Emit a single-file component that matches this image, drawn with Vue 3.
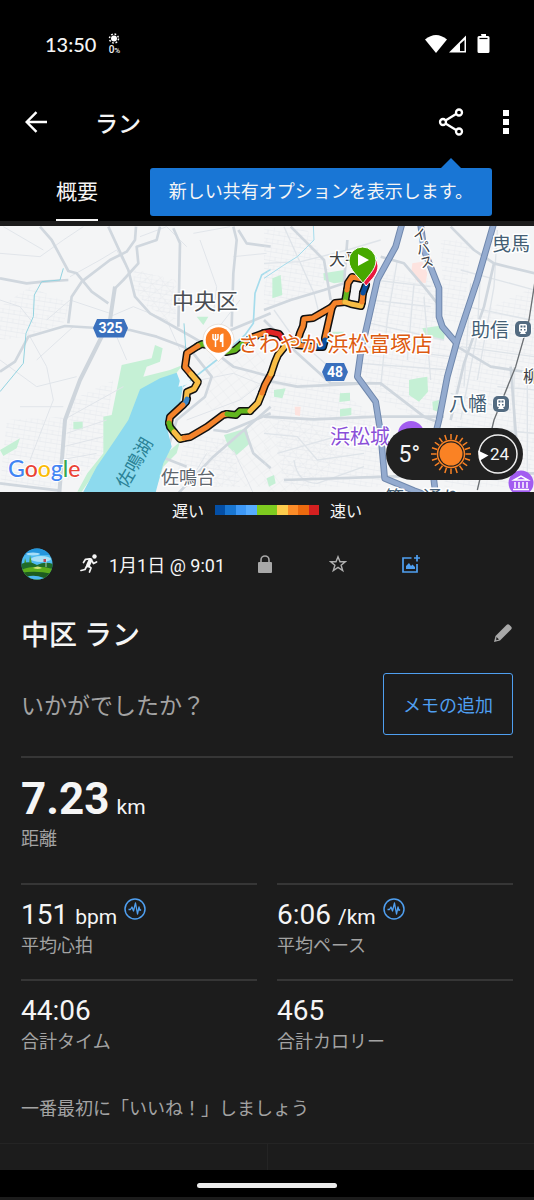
<template>
  <div class="page">
    <header class="top">
      <div class="status-bar">
        <span class="clock">13:50</span>
        <span class="rain">
          <svg width="12" height="11" viewBox="0 0 24 22">
            <circle cx="12" cy="11" r="6" fill="#fff" />
            <circle cx="12" cy="11" r="9" fill="none" stroke="#fff" stroke-width="3" stroke-dasharray="3.5 3.57" />
          </svg>
          <span>0<small>%</small></span>
        </span>
        <span class="status-icons">
          <svg width="66" height="22" viewBox="0 0 66 22" fill="#fff">
            <path d="M1 6.500Q12 -2.500 23 6.500L12 20Z" />
            <path d="M42 2.500V19.500H25Z" />
            <path d="M36 11V18H40.500V7Z" fill="#000" />
            <path d="M57 1h5v2h2q1.500 0 1.500 1.500v14q0 1.500-1.500 1.500h-9q-1.500 0-1.500-1.500v-14q0-1.500 1.500-1.500h2.500z" />
            <path d="M55.500 5.500h8" stroke="#000" stroke-width="1.200" />
          </svg>
        </span>
      </div>

      <div class="app-bar">
        <button class="icon-btn" aria-label="戻る">
          <svg width="24" height="24" viewBox="0 0 24 24" fill="none" stroke="#fff" stroke-width="2.400">
            <path d="M23 12H3M12.500 2.200L2.700 12l9.800 9.800" />
          </svg>
        </button>
        <h1>ラン</h1>
        <button class="icon-btn share" aria-label="共有">
          <svg width="28" height="28" viewBox="0 0 28 28" fill="none" stroke="#fff" stroke-width="2.300">
            <path d="M7.500 12.500L18.500 5.800M7.500 15.500L18.500 22.200" />
            <circle cx="5" cy="14" r="3" />
            <circle cx="21" cy="4.500" r="3" />
            <circle cx="21" cy="23.500" r="3" />
          </svg>
        </button>
        <button class="icon-btn" aria-label="メニュー">
          <svg width="24" height="26" viewBox="0 0 24 26" fill="#fff">
            <path d="M9 1h6v6H9zM9 10h6v6H9zM9 19h6v6H9z" />
          </svg>
        </button>
        <div class="tooltip" role="tooltip">新しい共有オプションを表示します。</div>
      </div>

      <nav class="tabs">
        <button class="tab">概要</button>
      </nav>
    </header>

    <section class="map">
      <svg class="map-canvas" viewBox="0 226 534 266">
        <defs>
          <pattern id="blocks" width="34" height="26" patternUnits="userSpaceOnUse" patternTransform="rotate(9)">
            <path d="M0 0H34M0 0V26M17 0V13M0 13H34" fill="none" stroke="#e6eaee" stroke-width="2" />
          </pattern>
          <pattern id="blocks-tilt" width="30" height="24" patternUnits="userSpaceOnUse" patternTransform="rotate(-38)">
            <path d="M0 0H30M0 0V24" fill="none" stroke="#e4e8ec" stroke-width="2" />
          </pattern>
        </defs>
        <rect y="226" width="534" height="266" fill="#f4f5f6" />

        <g transform="translate(0 220) scale(0.33333)" fill="none" stroke-linejoin="round">
          <path v-for="d in westBlocks" :key="d" :d="d" fill="url(#blocks)" />
          <path v-for="d in westTilted" :key="d" :d="d" fill="url(#blocks-tilt)" />
          <path v-for="d in westParks" :key="d" :d="d" fill="#c5f0d5" />
          <path v-for="d in westStreets" :key="d" :d="d" stroke="#e1e5ea" stroke-width="3" />
          <path v-for="d in westRoads" :key="d" :d="d" stroke="#d0d7de" stroke-width="8" />
          <path d="M345 200L330 300L240 480L195 600L178 820" stroke="#ced5dc" stroke-width="12" />
          <path d="M245 825L290 740L345 660L385 600L420 508L480 475L530 458L548 505L538 560L500 620L515 680L490 730L465 825Z" fill="#8ddaee" />
          <path d="M548 500L650 420L735 345L760 310L765 220L785 165L812 148" stroke="#a5dcec" stroke-width="5" />
          <path d="M0 515L70 430L78 340L100 290L103 225L125 185L180 180L190 145M552 310L558 400" stroke="#93d3e0" stroke-width="3" />
          <path d="M535 500L548 448L560 470L575 490Z" fill="#eef7fa" />
        </g>

        <g transform="translate(264 220) scale(0.33333)" fill="none" stroke-linejoin="round">
          <path v-for="d in eastBlocks" :key="d" :d="d" fill="url(#blocks)" />
          <path d="M0 600L140 600L240 700L120 825H0Z" fill="url(#blocks-tilt)" />
          <path v-for="d in eastParks" :key="d" :d="d" fill="#c5f0d5" />
          <path d="M445 130l30-5 15 35-5 30-25-5-18-30zM92 560l18 0-2 28-15-3z" fill="#fde3df" />
          <path v-for="d in eastStreets" :key="d" :d="d" stroke="#dfe4e9" stroke-width="4" />
          <path v-for="d in eastRoads" :key="d" :d="d" stroke="#d0d7de" stroke-width="8" />
          <path d="M812 190L795 300L755 440L690 600L640 810" stroke="#6c7074" stroke-width="4" />
          <path d="M0 175L60 135L100 110L150 60L148 15" stroke="#a5dcec" stroke-width="3" />
          <path v-for="d in highways" :key="d" :d="d" stroke="#7088ad" stroke-width="20" />
          <path v-for="d in highways" :key="d + 'in'" :d="d" stroke="#94abcf" stroke-width="14" />
        </g>

        <g fill="none" stroke-linejoin="round" stroke-linecap="round">
          <path v-for="seg in route" :key="seg.d" :d="seg.d" stroke="#111" stroke-width="8" />
          <path v-for="seg in route" :key="seg.d + 'c'" :d="seg.d" :stroke="seg.color" stroke-width="5" />
        </g>

        <g fill="#3a70bd">
          <path d="M97 319h27l4 9-4 9.500H97l-4-9.500zM326 363h18l4 9-4 9H326l-4-9z" />
        </g>
        <g class="shield">
          <text x="110.500" y="333">325</text>
          <text x="335" y="377">48</text>
        </g>

        <g class="label">
          <text class="area" x="205" y="309">中央区</text>
          <text class="place" x="188" y="484">佐鳴台</text>
          <text class="lake" transform="translate(140 466) rotate(-60)">佐鳴湖</text>
          <text class="small" x="329" y="265">大平台</text>
          <text class="small vertical" transform="translate(417 228) rotate(-14)">イパス</text>
          <text class="station" x="492" y="251">曳馬</text>
          <text class="station" x="471" y="337">助信</text>
          <text class="station" x="449" y="411">八幡</text>
          <text class="small" x="523" y="382">柳</text>
          <text class="castle" x="330" y="444">浜松城</text>
          <text class="station" x="385" y="505">第一通り</text>
          <text class="shop" x="238" y="351">さわやか 浜松富塚店</text>
        </g>

        <g v-for="s in stations" :key="s.y" :transform="`translate(${s.x} ${s.y})`">
          <circle r="9" fill="#fff" />
          <rect x="-8" y="-8" width="16" height="16" rx="5" fill="#536b81" />
          <path d="M-4 -3.500q0-1.500 1.500-1.500h5q1.500 0 1.500 1.500v5q0 1.500-1.500 1.500h-5Q-4 3-4 1.500zM-3 5l1-2h4l1 2z" fill="#fff" />
          <path d="M-2.500 -3.500h2v2h-2zM.5 -3.500h2v2h-2zM-2.500 0h1.500v1.500h-1.500zM1 0h1.500v1.500H1z" fill="#536b81" />
        </g>

        <circle cx="411" cy="434" r="13" fill="#a25cf0" />
        <g transform="translate(521 483)">
          <circle r="12.500" fill="#a25cf0" />
          <path d="M-7 -3L0 -7L7 -3ZM-6 -1V5M-2 -1V5M2 -1V5M6 -1V5M-8 6.500H8" fill="none" stroke="#fff" stroke-width="1.500" />
        </g>

        <path d="M218.500 361.500l-8-8.500a15.500 15.500 0 1 1 16 0z" fill="#fff" stroke="#d8d0c8" stroke-width=".6" />
        <circle cx="218.500" cy="340" r="12.800" fill="#fb7d22" />
        <path d="M213 334v4q0 2 2.500 2t2.500-2v-4M215.500 334v13" fill="none" stroke="#fff" stroke-width="1.500" />
        <path d="M223.500 333.500v13.500h-1.700v-5h-2v-5q0-3.500 3.700-3.500z" fill="#fff" />

        <path d="M366 286c-4-7-11-12-11-20a11.500 11.500 0 0 1 23 0c0 8-6 13-12 20z" fill="#e8173e" stroke="#fff" />
        <path d="M363 283.500c-3-6-14-13-14-23a13.500 13.500 0 0 1 27 0c0 10-10 17-13 23z" fill="#46a800" stroke="#fff" />
        <path d="M358 254v12l11-6z" fill="#fff" />

        <text class="google" x="8" y="477"><tspan fill="#4285f4">G</tspan><tspan fill="#ea4335">o</tspan><tspan fill="#fbbc05">o</tspan><tspan fill="#4285f4">g</tspan><tspan fill="#34a853">l</tspan><tspan fill="#ea4335">e</tspan></text>
      </svg>

      <div class="weather">
        <span>5°</span>
        <svg width="40" height="40" viewBox="-20 -20 40 40">
          <path v-for="a in 20" :key="a" d="M0 -14.500V-20" :transform="`rotate(${a * 18})`" stroke="#fa8224" stroke-width="1.500" />
          <circle r="13.500" fill="none" stroke="#fa8224" stroke-width="1.500" />
          <circle r="11.500" fill="#fa8224" />
        </svg>
        <span class="wind">
          <svg width="40" height="40" viewBox="0 0 40 40">
            <circle cx="20" cy="20" r="19" fill="none" stroke="#eee" stroke-width="1.500" />
            <path d="M0 16.500L10.500 21.500L2 26.500Z" fill="#fff" />
          </svg>
          <span>24</span>
        </span>
      </div>
    </section>

    <div class="legend">
      <span>遅い</span>
      <span class="scale">
        <i v-for="(c, i) in paceColors" :key="i" :style="{ background: c }"></i>
      </span>
      <span>速い</span>
    </div>

    <main class="content">
      <div class="meta">
        <svg class="avatar" width="32" height="32" viewBox="0 0 32 32">
          <clipPath id="round"><circle cx="16" cy="16" r="15.500" /></clipPath>
          <g clip-path="url(#round)">
            <rect width="32" height="32" fill="#4dbaf0" />
            <rect width="32" height="7" fill="#2496dd" />
            <ellipse cx="12" cy="6" rx="7" ry="1.500" fill="#a7def8" />
            <ellipse cx="20" cy="11" rx="10" ry="3" fill="#a9e0f6" />
            <path d="M3 17l1-7 2 7zM8 16l1-9 2 9z" fill="#4b9a2c" />
            <path d="M0 16q8-4 16 1q8-4 16-1v16H0z" fill="#1f6b2a" />
            <path d="M0 22q14-6 32-1v11H0z" fill="#5cad1d" />
            <path d="M12 20q5-3 9 0q-4 2-9 0z" fill="#cfe07a" />
            <path d="M0 25q14-3 32 1v6H0z" fill="#1d5c20" />
            <path d="M5 29q8-3 18 1v2H5z" fill="#4db8f0" />
            <path d="M25 19v-8" stroke="#eee" stroke-width=".7" />
            <path d="M25 11h-2.500v3H25z" fill="#b84a58" />
          </g>
        </svg>
        <svg class="runner" width="18" height="20" viewBox="0 0 18 20" fill="none" stroke="#f5f5f5" stroke-linecap="round" stroke-linejoin="round">
          <circle cx="14.500" cy="2.500" r="2.200" fill="#f5f5f5" stroke="none" />
          <path d="M10.500 6L8 11.500" stroke-width="4" />
          <path d="M9.500 4.800L5.500 5.300L3.500 8.500M12 7L13.500 9.500L16.500 8M8.500 12L11 14L9.500 18M6.500 12.500L5 15.500L1 16.500" stroke-width="1.700" />
        </svg>
        <time>1月1日 @ 9:01</time>
        <button class="meta-btn" aria-label="非公開">
          <svg width="14" height="18" viewBox="0 0 14 18">
            <path d="M3 8V5a4 4 0 0 1 8 0v3" fill="none" stroke="#a8a8a8" stroke-width="1.600" />
            <rect y="7" width="14" height="11" rx="1" fill="#a8a8a8" />
          </svg>
        </button>
        <button class="meta-btn" aria-label="お気に入り">
          <svg width="18" height="18" viewBox="0 0 18 18">
            <path d="M9 1.800l2 5h5.300l-4.200 3.400 1.600 5.300L9 12.300l-4.700 3.200 1.600-5.300L1.700 6.800H7z" fill="none" stroke="#b0b0b0" stroke-width="1.400" />
          </svg>
        </button>
        <button class="meta-btn" aria-label="写真を追加">
          <svg width="18" height="18" viewBox="0 0 18 18" fill="none" stroke="#4f9ff0" stroke-width="1.700">
            <path d="M9.500 3H1v14h14V9M12 3h6M15 0v6.500" />
            <path d="M4 14V11l3-3 2 3 1.500-1.500L13 12v2z" fill="#4f9ff0" stroke="none" />
          </svg>
        </button>
      </div>

      <div class="title-row">
        <h2>中区 ラン</h2>
        <button class="icon-btn" aria-label="編集">
          <svg width="20" height="20" viewBox="0 0 20 20" fill="#a8a8a8">
            <path d="M1 19l1.500-6L13.500 2q1.500-1.500 3 0l1.500 1.500q1.500 1.500 0 3L7 17.500z" />
            <path d="M3.500 14l2.500 2.500-2.800.8z" fill="#1c1c1c" />
          </svg>
        </button>
      </div>

      <div class="note-row">
        <p>いかがでしたか？</p>
        <button class="note-btn">メモの追加</button>
      </div>

      <dl class="stats">
        <div v-for="s in stats" :key="s.label" class="stat" :class="{ primary: s.primary }">
          <dd>
            {{ s.value }}<small v-if="s.unit">{{ s.unit }}</small>
            <svg v-if="s.chart" class="pulse" width="22" height="22" viewBox="0 0 22 22" fill="none" stroke="#4f9ff0">
              <circle cx="11" cy="11" r="10" stroke-width="1.500" />
              <path d="M4.500 11.500h2l1.500-2.500 1.500 4 2-8 2 11 1.500-7 1 3.500 1-1" stroke-width="1.300" stroke-linejoin="round" />
            </svg>
          </dd>
          <dt>{{ s.label }}</dt>
        </div>
      </dl>

      <p class="likes">一番最初に「いいね！」しましょう</p>
    </main>

    <div class="actions">
      <span></span>
      <span></span>
    </div>
    <footer class="nav-bar"><span></span></footer>
  </div>
</template>

<script setup>
const stats = [
  { value: '7.23', unit: 'km', label: '距離', primary: true },
  { value: '151', unit: 'bpm', label: '平均心拍', chart: true },
  { value: '6:06', unit: '/km', label: '平均ペース', chart: true },
  { value: '44:06', label: '合計タイム' },
  { value: '465', label: '合計カロリー' }
]

const paceColors = [
  '#044fa6', '#1976d2', '#3d98f6', '#56acff', '#7ecb20',
  '#7ecb20', '#fccb4c', '#fb8c28', '#eb690e', '#d42020'
]

const stations = [
  { x: 523, y: 329 },
  { x: 501, y: 404 }
]

const orange = '#f4832b'
const yellow = '#f8bd45'
const green = '#62b51e'
const red = '#e02424'
const blue = '#0a4fa0'

// 走行ルート（区間ごとのペース色）
const route = [
  { color: green, d: 'M218 347L202 344L198 346' },
  { color: orange, d: 'M198 346L187 353L185 367L191 374' },
  { color: yellow, d: 'M191 374L198 382L194 389L187 392L186 401' },
  { color: '#3b86c8', d: 'M187 399L186 402L183 405' },
  { color: orange, d: 'M183 405L170 417L169 423' },
  { color: green, d: 'M169 423L170 427L174 432' },
  { color: yellow, d: 'M174 432L180 439L184 438' },
  { color: orange, d: 'M184 438L190 437L207 427L223 415L227 414' },
  { color: green, d: 'M227 414L236 415L240 411L250 411' },
  { color: yellow, d: 'M250 411L258 403L262 393' },
  { color: orange, d: 'M262 393L265 385L271 374' },
  { color: yellow, d: 'M271 374L275 362L278 355L286 345' },
  { color: red, d: 'M286 343L279 334L270 332L264 333' },
  { color: orange, d: 'M264 333L253 337L242 344' },
  { color: green, d: 'M242 344L235 350L226 352' },
  { color: yellow, d: 'M286 345L297 343' },
  { color: orange, d: 'M297 343L300 333L303 326L304 319L313 318L332 307L335 303L345 302' },
  { color: orange, d: 'M332 307L325 338' },
  { color: blue, d: 'M325 340L323 347L316 347' },
  { color: orange, d: 'M314 347L297 345' },
  { color: green, d: 'M345 302L347 290' },
  { color: orange, d: 'M347 290L348 283L352 277L362 279' },
  { color: yellow, d: 'M345 302L351 304L361 306L362 302' },
  { color: orange, d: 'M362 302L363 293' },
  { color: blue, d: 'M363 293L366 285' }
]

const westBlocks = [
  'M0 260L90 200L210 250L190 310L80 350L0 360Z',
  'M20 600L190 590L180 800L0 800Z',
  'M215 540L340 480L310 700L230 780L190 780Z',
  'M400 150L520 180L530 300L440 260L400 200Z',
  'M560 640L700 660L720 800L520 800Z'
]
const westTilted = [
  'M410 150L530 180L520 320L420 230Z',
  'M640 380L800 380L780 560L620 570L600 480Z',
  'M620 680L812 580L812 800H560Z'
]
const westParks = [
  'M465 375L488 385L480 425L440 440L430 470L510 450L548 435L520 470L420 510L385 620L300 735L245 815H232L262 760L310 700L310 590L335 585L365 435L455 415Z',
  'M590 290L625 290L610 315ZM0 690L60 655L50 685L10 708ZM220 605H248V628H220ZM672 645L740 625L750 670L710 705L685 680Z',
  'M455 790L500 700L540 665L530 700L490 740L470 800Z'
]
const westStreets = [
  'M0 100L120 110L190 60L250 20M10 20L130 90M0 240L60 260L100 310',
  'M210 170L300 120L350 90L390 160M140 300L210 240L330 280M110 420L220 320',
  'M90 350L140 440L160 540L90 720M0 420L110 500L230 470M60 560L190 560',
  'M190 600L370 500M200 640L320 600M190 680L310 650M180 720L290 700',
  'M330 290L400 260L500 300L540 390M350 350L380 420M420 50L500 20L560 80',
  'M580 40L690 20M600 60L650 200L640 280M700 110L800 100M650 330L720 240',
  'M600 480L700 460L800 500M560 600L720 540L812 470M620 700L560 800M700 690L760 820'
]
const westRoads = [
  'M120 20L155 60L205 153L230 160L275 215L325 250',
  'M0 175L80 190L130 185L205 180',
  'M205 310L215 230L245 185L330 120L380 95L405 60L408 20',
  'M325 20L385 150L405 230L450 280L540 330L610 370L700 440L812 470',
  'M480 20L470 60L410 80L415 130L370 180L345 205',
  'M0 455L45 425L85 350L195 318L390 330L470 350L550 380L580 400',
  'M520 25L540 70L535 320M700 20L710 60L700 160L695 320M715 30L740 70L812 80',
  'M580 400L635 470L615 530L530 600L495 715L560 740M640 630L680 635L812 580M735 630L760 700L812 745',
  'M0 790L80 800L180 812M530 825L640 710L812 560M620 360L812 280'
]

const eastBlocks = [
  'M0 20L130 30L200 160L160 220L0 270Z',
  'M360 150L520 180L520 330L560 390L510 620L350 540L290 450L320 270Z',
  'M530 60L620 60L600 320L540 300Z',
  'M600 300L812 200V800H540L580 400Z',
  'M0 450L180 480L350 600L350 800H60Z'
]
const eastParks = [
  'M25 175L50 165L55 225L25 235ZM178 160L240 150L245 185L210 190L180 180ZM475 325L545 315L540 360L485 350Z',
  'M435 480L460 475L490 470L492 515L465 545L435 525ZM228 520L258 518V542L226 546ZM228 568L262 563V585L228 590Z',
  'M30 510L65 505L55 535L30 530ZM205 335L240 335L240 350L205 348ZM505 545L525 540L522 575L507 570ZM8 775L30 765L35 790L15 800Z'
]
const eastStreets = [
  'M0 130L110 125L250 90L350 60M60 20L150 220L170 300M30 270L80 340L240 480',
  'M330 180L500 200M320 240L500 260M320 310L540 360M300 380L560 410M290 430L560 450M400 120L370 300L350 500M450 190L430 420M480 230L500 480',
  'M590 150L812 210M620 190L600 500M650 140L640 340L590 600M700 30L690 200L640 480M610 260L800 300M560 520L740 570M590 380L812 410M750 440V800M700 500L812 510M580 620L812 640M790 440V800',
  'M0 640L100 650L160 720L300 700M40 700L250 640M90 720Q100 790 160 790L300 740'
]
const eastRoads = [
  'M0 270L80 240L180 210L240 190L250 60M80 20L180 120L200 240M0 300L100 400L200 490L350 490L480 590L530 610',
  'M0 480L100 500L300 490M0 590L150 598L340 590L540 590M350 110L420 130L480 200L520 250',
  'M560 20L600 60L630 90L690 130L812 160M690 130L660 260L600 430L560 600M580 380L680 440L812 460M740 440L760 700M60 780L370 770L812 760'
]
const highways = [
  'M413 15L395 80L340 180L315 290L290 400L280 470L335 545L350 640L362 775L450 812L500 830',
  'M470 15L480 90L525 205L525 290L535 320L578 370',
  'M688 15L640 180L580 360L550 470L525 600L500 700L515 825'
]
</script>

<style>
body {
  margin: 0;
  background: #1c1c1c;
}
</style>

<style scoped>
.page {
  min-height: 100vh;
  background: #1c1c1c;
  color: #f5f5f5;
  font-family: Roboto, "Noto Sans CJK JP", sans-serif;
}
button {
  padding: 0;
  border: none;
  background: none;
  color: inherit;
  font-family: inherit;
  cursor: pointer;
}
svg {
  display: block;
}
.top {
  margin-bottom: 5px;
  background: #000;
}
.status-bar {
  display: flex;
  align-items: center;
  height: 88px;
  padding: 0 44px 0 45px;
}
.clock {
  font-family: Lato, Roboto, sans-serif;
  font-size: 20px;
  font-weight: 500;
}
.rain {
  display: flex;
  flex-direction: column;
  align-items: center;
  margin-left: 12px;
  font-size: 10px;
  font-weight: 500;
  line-height: 11px;
}
.rain small {
  font-size: 8px;
}
.status-icons {
  margin-left: auto;
}
.app-bar {
  position: relative;
  display: flex;
  align-items: center;
  height: 68px;
  padding: 0 16px 0 24px;
}
.app-bar h1 {
  flex: 1;
  margin: 0 0 0 47px;
  font-size: 23px;
  font-weight: 500;
}
.share {
  margin-right: 28px;
}
.tooltip {
  position: absolute;
  z-index: 2;
  top: 80px;
  right: 42px;
  padding: 0 19px;
  border-radius: 3px;
  background: #1976d5;
  font-size: 18px;
  line-height: 48px;
  white-space: nowrap;
}
.tooltip::before {
  content: '';
  position: absolute;
  right: 31px;
  bottom: 100%;
  border: 10px solid transparent;
  border-top: none;
  border-bottom-color: #1976d5;
}
.tabs {
  display: flex;
  height: 65px;
  padding: 0 56px;
}
.tab {
  padding-top: 4px;
  border-bottom: 2px solid #f5f5f5;
  font-size: 21px;
}
.map {
  position: relative;
}
.map-canvas {
  width: 100%;
  height: auto;
}
.label text {
  fill: #3c4043;
  stroke: #fff;
  stroke-width: 3px;
  stroke-linejoin: round;
  paint-order: stroke;
  font-size: 18px;
}
.label .area {
  fill: #4a4e53;
  font-size: 22px;
  text-anchor: middle;
}
.label .place {
  fill: #5f666d;
  text-anchor: middle;
}
.label .lake {
  fill: #2a8296;
  stroke: none;
  text-anchor: middle;
}
.label .small {
  font-size: 16px;
}
.label .vertical {
  font-size: 14px;
  writing-mode: vertical-rl;
}
.label .station {
  fill: #455f75;
  font-size: 19px;
}
.label .castle {
  fill: #8a4fd8;
  font-size: 20px;
}
.label .shop {
  fill: #dd5a10;
  font-size: 21px;
}
.shield text {
  fill: #fff;
  font-size: 14px;
  font-weight: 700;
  text-anchor: middle;
}
.google {
  stroke: #fff;
  stroke-width: 2px;
  paint-order: stroke;
  font-family: Lato, sans-serif;
  font-size: 23px;
  font-weight: 500;
}
.weather {
  position: absolute;
  right: 11px;
  bottom: 12px;
  display: flex;
  align-items: center;
  gap: 7px;
  height: 52px;
  padding: 0 5px 0 12px;
  border-radius: 26px;
  background: #212121;
  font-size: 23px;
}
.weather > svg {
  margin-left: 4px;
}
.wind {
  position: relative;
}
.wind span {
  position: absolute;
  top: 10px;
  left: 12px;
  font-size: 17px;
  line-height: 20px;
}
.legend {
  display: flex;
  align-items: center;
  justify-content: center;
  gap: 11px;
  height: 36px;
  font-size: 16px;
}
.scale {
  display: flex;
  width: 104px;
  height: 10px;
}
.scale i {
  flex: 1;
}
.content {
  padding: 0 21px;
}
.meta {
  display: flex;
  align-items: center;
  height: 72px;
}
.runner {
  margin: 0 11px 0 27px;
}
.meta time {
  margin-right: 3px;
  font-size: 18px;
}
.meta-btn {
  display: flex;
  justify-content: center;
  width: 73px;
}
.title-row {
  display: flex;
  align-items: center;
  justify-content: space-between;
  height: 66px;
}
.title-row h2 {
  margin: 0;
  font-size: 28px;
  font-weight: 500;
}
.note-row {
  display: flex;
  align-items: center;
  justify-content: space-between;
  padding: 7px 0 21px;
  color: #a3a3a3;
}
.note-row p {
  margin: 0;
  font-size: 23px;
}
.note-btn {
  height: 62px;
  padding: 0 19px;
  border: 1px solid #4f9ff0;
  border-radius: 3px;
  color: #4f9ff0;
  font-size: 18px;
}
.stats {
  display: grid;
  grid-template-columns: 1fr 1fr;
  column-gap: 20px;
  margin: 0;
}
.stat {
  display: flex;
  flex-direction: column;
  padding: 13px 0 19px;
  border-top: 2px solid #363636;
}
.stat dd {
  display: flex;
  align-items: baseline;
  gap: 7px;
  margin: 0;
  font-size: 28px;
  line-height: 34px;
}
.stat small {
  font-size: 21px;
  line-height: 24px;
}
.stat dt {
  color: #a3a3a3;
  font-size: 18px;
  line-height: 28px;
}
.stat .pulse {
  align-self: flex-start;
}
.stat.primary {
  grid-column: 1 / -1;
  padding: 15px 0 30px;
}
.primary dd {
  font-size: 44px;
  font-weight: 700;
  line-height: 52px;
}
.primary small {
  font-weight: 400;
}
.likes {
  margin: 0;
  color: #a3a3a3;
  font-size: 18px;
  line-height: 68px;
}
.actions {
  display: grid;
  grid-template-columns: 1fr 1fr;
  height: 26px;
  border-top: 1px solid #242424;
}
.actions span + span {
  border-left: 1px solid #242424;
}
.nav-bar {
  display: flex;
  align-items: center;
  justify-content: center;
  height: 27px;
  background: #000;
}
.nav-bar span {
  width: 140px;
  height: 5px;
  margin-top: 4px;
  border-radius: 3px;
  background: #ececec;
}
</style>
